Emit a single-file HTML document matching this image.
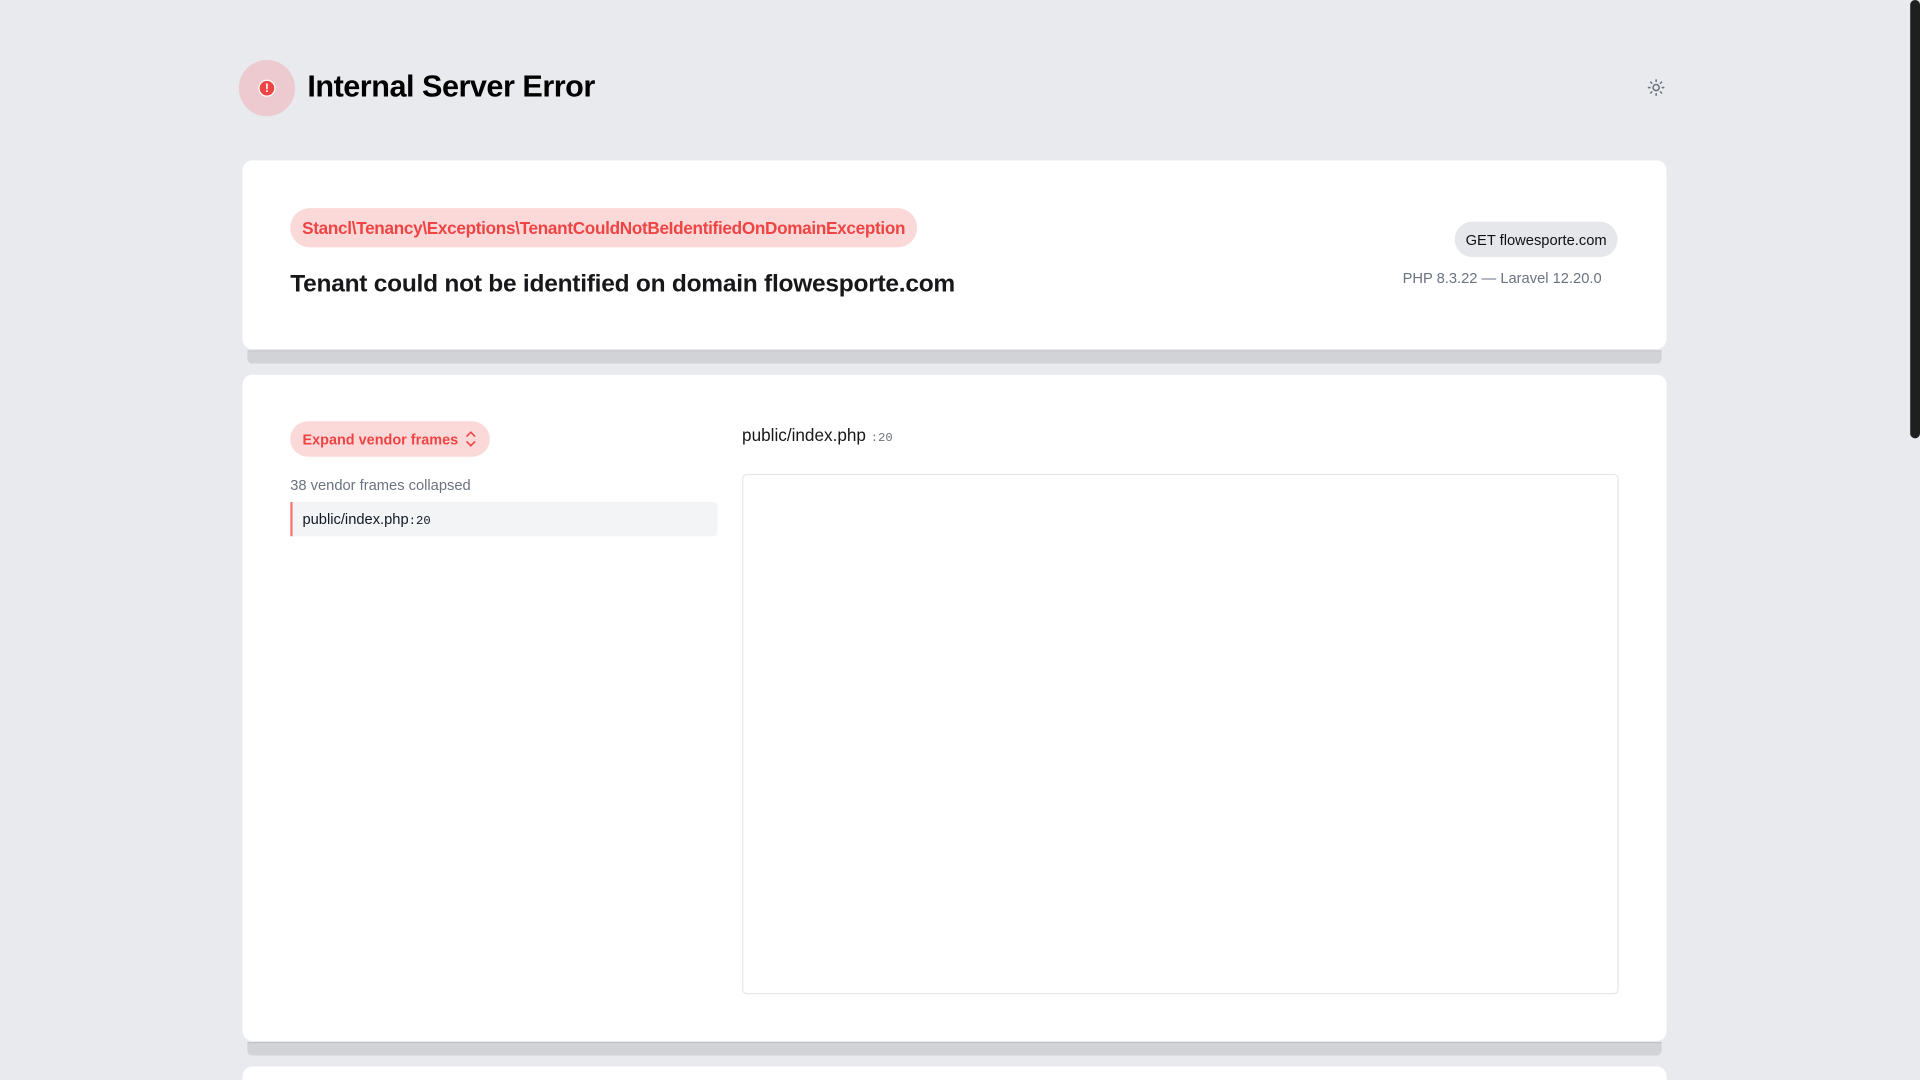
<!DOCTYPE html>
<html><head><meta charset="utf-8"><style>
html,body{margin:0;padding:0;width:1920px;height:1080px;overflow:hidden;background:#e9eaee;}
#w{position:absolute;left:0;top:0;width:1568px;height:882px;transform:scale(1.22449);transform-origin:0 0;font-family:"Liberation Sans",sans-serif;color:#111827;overflow:hidden;}
.a{position:absolute;}
.card{position:absolute;background:#fff;border-radius:8px;left:198px;width:1163px;}
.bar{position:absolute;left:202px;width:1155px;height:11px;background:#d1d3d7;border-top:1px solid #bfc1c6;box-sizing:border-box;border-radius:0 0 4px 4px;}
.mono{font-family:"Liberation Mono",monospace;}
</style></head><body><div id="w">
<div class="a" style="left:195px;top:49px;width:46px;height:46px;border-radius:50%;background:#edcacf"></div>
<div class="a" style="left:211px;top:65px;width:14px;height:14px;border-radius:50%;background:#ef4444;border:1px solid #fff;box-sizing:border-box;color:#fff;font-size:10px;font-weight:bold;text-align:center;line-height:13px">!</div>
<div class="a" style="left:251px;top:57px;font-size:25px;font-weight:bold;color:#000;letter-spacing:-0.4px">Internal Server Error</div>
<svg class="a" style="left:1345px;top:64px" width="15" height="15" viewBox="0 0 24 24" fill="none" stroke="#6b7280" stroke-width="2" stroke-linecap="round"><circle cx="12" cy="12" r="4"/><path d="M12 2v2M12 20v2M4.9 4.9l1.4 1.4M17.7 17.7l1.4 1.4M2 12h2M20 12h2M4.9 19.1l1.4-1.4M17.7 6.3l1.4-1.4"/></svg>

<div class="card" style="top:131px;height:154px"></div>
<div class="bar" style="top:286px"></div>
<div class="a" style="left:237px;top:170px;width:512px;height:32px;border-radius:16px;background:#fbd9d9;color:#ef4444;font-size:14px;font-weight:bold;line-height:32px;text-align:center;letter-spacing:-0.25px">Stancl\Tenancy\Exceptions\TenantCouldNotBeIdentifiedOnDomainException</div>
<div class="a" style="left:237px;top:221px;font-size:20px;font-weight:bold;color:#18181b;letter-spacing:-0.2px">Tenant could not be identified on domain flowesporte.com</div>
<div class="a" style="left:1188px;top:181px;width:133px;height:29px;border-radius:15px;background:#e5e7eb;font-size:12px;line-height:30px;text-align:center;color:#111">GET flowesporte.com</div>
<div class="a" style="left:1100px;width:208px;text-align:right;top:220px;font-size:12px;color:#6b7280">PHP 8.3.22 — Laravel 12.20.0</div>

<div class="card" style="top:306px;height:544px"></div>
<div class="bar" style="top:851px"></div>
<div class="card" style="top:871px;height:30px"></div>
<div class="a" style="left:237px;top:344px;width:163px;height:29px;border-radius:15px;background:#fbd9d9;color:#ef4444;font-size:11.8px;font-weight:bold;line-height:30px;padding-left:10px;box-sizing:border-box">Expand vendor frames
<svg style="position:absolute;left:143px;top:8px" width="9" height="13" viewBox="0 0 9 13" fill="none" stroke="#ef4444" stroke-width="1.3"><path d="M1 4.5L4.5 1 8 4.5M1 8.5L4.5 12 8 8.5"/></svg></div>
<div class="a" style="left:237px;top:389px;font-size:12px;color:#6b7280">38 vendor frames collapsed</div>
<div class="a" style="left:237px;top:410px;width:349px;height:28px;background:#f3f4f6;border-left:2px solid #f87171;box-sizing:border-box;font-size:12px;line-height:29px;padding-left:8px;border-radius:0 3px 3px 0">public/index.php<span class="mono" style="font-size:10px">:20</span></div>
<div class="a" style="left:606px;top:347px;font-size:14px;color:#18181b">public/index.php <span class="mono" style="font-size:10px;color:#6b7280">:20</span></div>
<div class="a" style="left:606px;top:387px;width:716px;height:425px;border:1px solid #e5e7eb;border-radius:4px;box-sizing:border-box"></div>
<div class="a" style="left:1560px;top:0;width:8px;height:358px;background:#1f1f1f;border-radius:4px"></div>
</div></body></html>
